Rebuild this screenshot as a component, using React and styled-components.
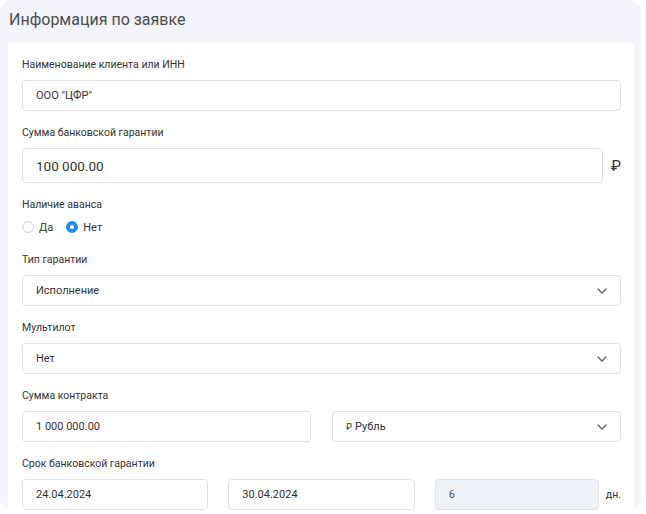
import React from "react";
import styled, { createGlobalStyle } from "styled-components";

const Global = createGlobalStyle`
  html, body { margin: 0; padding: 0; background: #ffffff; }
  body { font-family: Roboto, "Noto Sans", Arial, sans-serif; color: #333; }
  * { box-sizing: border-box; }
`;

const Panel = styled.section`
  width: 641px;
  height: 510px;
  background: #f4f4fb;
  border-radius: 12px;
  overflow: hidden;
  display: flex;
  flex-direction: column;
`;

const Title = styled.h2`
  margin: 0;
  padding: 9px 0 0 9px;
  height: 43px;
  flex-shrink: 0;
  font-size: 16px;
  font-weight: 400;
  color: #4d4d52;
  line-height: 22px;
`;

const Card = styled.div`
  margin-left: 8px;
  width: 626px;
  background: #fff;
  border-radius: 4px 4px 0 0;
  padding: 15px 13px 0 14px;
  flex: 1 0 auto;
`;

const Field = styled.div`
  margin-bottom: 15px;
`;

const Label = styled.div`
  font-size: 10.5px;
  line-height: 14px;
  color: #333;
  margin-bottom: ${(p) => p.$mb ?? 8}px;
`;

const Row = styled.div`
  display: flex;
  align-items: center;
  gap: ${(p) => p.$gap || 8}px;
`;

const Grid = styled.div`
  display: grid;
  grid-template-columns: repeat(${(p) => p.$cols}, 1fr);
  column-gap: ${(p) => p.$gap}px;
`;

const Box = styled.div`
  flex: 1;
  height: ${(p) => p.$h || 31}px;
  border: 1px solid #dfe1e6;
  border-radius: 4px;
  background: ${(p) => (p.$disabled ? "#eef1f6" : "#fff")};
  display: flex;
  align-items: center;
  justify-content: space-between;
  padding: 0 13px 0 13px;
  font-size: ${(p) => p.$fs || 11}px;
  color: ${(p) => (p.$disabled ? "#555" : "#333")};
`;

const Suffix = styled.span`
  font-size: ${(p) => p.$fs || 11}px;
  color: #333;
`;

const SmallSign = styled.span`
  font-size: 9px;
  margin-right: 3px;
`;

const RadioGroup = styled.div`
  display: flex;
  align-items: center;
  height: 20px;
  padding-bottom: 2px;
  gap: 13px;
`;

const RadioItem = styled.label`
  display: flex;
  align-items: center;
  gap: 5px;
  font-size: 11px;
  color: #333;
`;

const RadioDot = styled.span`
  width: 12px;
  height: 12px;
  border-radius: 50%;
  border: ${(p) => (p.$on ? "4px solid #1d8de8" : "1px solid #cfd2d8")};
  background: #fff;
  display: inline-block;
`;

const Chevron = () => (
  <svg width="10" height="6" viewBox="0 0 10 6" fill="none">
    <path d="M1 1l4 4 4-4" stroke="#555" strokeWidth="1.2" strokeLinecap="round" strokeLinejoin="round" />
  </svg>
);

const Select = ({ children }) => (
  <Box>
    <span>{children}</span>
    <Chevron />
  </Box>
);

export default function App() {
  return (
    <>
      <Global />
      <Panel>
        <Title>Информация по заявке</Title>
        <Card>
          <Field>
            <Label>Наименование клиента или ИНН</Label>
            <Row>
              <Box>ООО "ЦФР"</Box>
            </Row>
          </Field>
          <Field>
            <Label>Сумма банковской гарантии</Label>
            <Row $gap={8}>
              <Box $h={35} $fs={13.5}>100 000.00</Box>
              <Suffix $fs={15}>₽</Suffix>
            </Row>
          </Field>
          <Field>
            <Label $mb={6}>Наличие аванса</Label>
            <RadioGroup>
              <RadioItem>
                <RadioDot />
                Да
              </RadioItem>
              <RadioItem>
                <RadioDot $on />
                Нет
              </RadioItem>
            </RadioGroup>
          </Field>
          <Field>
            <Label>Тип гарантии</Label>
            <Row>
              <Select>Исполнение</Select>
            </Row>
          </Field>
          <Field>
            <Label>Мультилот</Label>
            <Row>
              <Select>Нет</Select>
            </Row>
          </Field>
          <Field>
            <Label>Сумма контракта</Label>
            <Grid $cols={2} $gap={21}>
              <Row>
                <Box>1 000 000.00</Box>
              </Row>
              <Row>
                <Select>
                  <SmallSign>₽</SmallSign>Рубль
                </Select>
              </Row>
            </Grid>
          </Field>
          <Field>
            <Label>Срок банковской гарантии</Label>
            <Grid $cols={3} $gap={20}>
              <Row>
                <Box>24.04.2024</Box>
              </Row>
              <Row>
                <Box>30.04.2024</Box>
              </Row>
              <Row $gap={7}>
                <Box $disabled>6</Box>
                <Suffix $fs={10.5}>дн.</Suffix>
              </Row>
            </Grid>
          </Field>
        </Card>
      </Panel>
    </>
  );
}
